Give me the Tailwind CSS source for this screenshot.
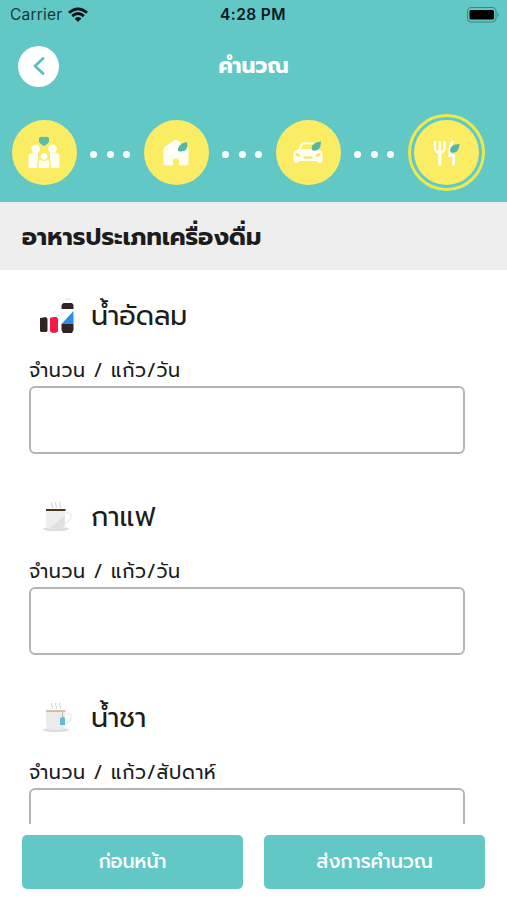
<!DOCTYPE html>
<html lang="th">
<head>
<meta charset="utf-8">
<title>คำนวณ</title>
<script src="https://cdn.jsdelivr.net/npm/@tailwindcss/browser@4"></script>
</head>
<body class="bg-white">
<div class="flex h-[900px] w-[507px] flex-col overflow-hidden bg-white font-['Prompt','Noto_Sans_Thai','Noto_Sans',sans-serif] text-[#1c1c1c]">
  <header class="h-[202px] shrink-0 bg-[#62c8c5]">
    <div class="grid h-[30px] grid-cols-3 items-center pr-[7px] pl-[10px] font-['Inter',sans-serif]">
      <div class="flex items-center gap-[6px] text-[15.5px] tracking-[0.2px] text-[#12393a]">
        <span>Carrier</span>
        <svg class="h-[16px] w-[20px]" viewBox="0 0 20 16" fill="none" stroke="#061516" stroke-width="2.8"><path d="M1 5.8Q10-2.1 19 5.8M4.2 9.1Q10 4 15.8 9.1"/><path d="M6.6 11.6Q10 8.5 13.4 11.6L10 15Z" fill="#061516" stroke="none"/></svg>
      </div>
      <span class="ml-[-4px] text-center text-[15.5px] font-semibold tracking-[0.4px] whitespace-nowrap text-[#07191a]">4:28 PM</span>
      <svg class="ml-auto h-[17px] w-[34px]" viewBox="0 0 34 17"><rect x="1.5" y=".5" width="28.5" height="14.5" rx="4" fill="none" stroke="#3f8582" stroke-width="1.1"/><rect x="3.5" y="3" width="24.5" height="9.5" rx="1.5" fill="#000"/><path d="M31.5 5.5Q34 7.8 31.5 10.1Z" fill="#3f8582"/></svg>
    </div>
    <div class="grid h-[72px] grid-cols-[40px_1fr_40px] items-center px-[18px]">
      <div class="flex h-[41px] w-[41px] items-center justify-center rounded-full bg-white">
        <svg class="h-[18px] w-[12px]" viewBox="0 0 12 18" fill="none" stroke="#5bbfba" stroke-width="2.8" stroke-linecap="round" stroke-linejoin="round"><path d="M10 1.5L2 9L10 16.5"/></svg>
      </div>
      <h1 class="text-center text-[21.5px] font-bold text-white"><span>คำนวณ</span></h1>
    </div>
    <div class="flex h-[101px] items-center pl-[11.5px]">
      <div class="flex h-[65px] w-[65px] items-center justify-center rounded-full bg-[#faed64]">
        <svg class="h-[34px] w-[34px]" viewBox="0 0 34 34"><path d="M12 2Q14 0 17 1Q20 0 22 2V6Q21 8 17 10Q13 8 12 6Z" fill="#5dbba9"/><g fill="#fffef4"><circle cx="8.7" cy="12.8" r="4.4"/><circle cx="25.5" cy="12.8" r="4.4"/><path d="M1.5 32V21Q1.5 17 5.5 17H11V24Q10 25 10 32ZM32.5 32V21Q32.5 17 28.5 17H23V24Q24 25 24 32ZM11.5 32V27Q11.5 24 14.5 24H19.5Q22.5 24 22.5 27V32Z"/><circle cx="17" cy="20.5" r="4" stroke="#f8e860" stroke-width="1"/></g></svg>
      </div>
      <div class="flex w-[67px] justify-center gap-[9.8px] pt-[3px]"><i class="h-[7px] w-[7px] rounded-full bg-white"></i><i class="h-[7px] w-[7px] rounded-full bg-white"></i><i class="h-[7px] w-[7px] rounded-full bg-white"></i></div>
      <div class="flex h-[65px] w-[65px] items-center justify-center rounded-full bg-[#faed64]">
        <svg class="h-[30px] w-[28px]" viewBox="0 0 28 30"><path d="M1.5 11Q1.5 9.5 3 8.5L12 2.5Q14 1 16 2.5L25 8.5Q26.5 9.5 26.5 11V25Q26.5 27.5 24 27.5H17V22Q17 20.5 15.5 20.5H13Q11 20.5 11 22V27.5H4Q1.5 27.5 1.5 25Z" fill="#fffef2"/><path d="M16 13Q15 6 25 4Q27 14 18 13.5Z" fill="#56b6a3"/></svg>
      </div>
      <div class="flex w-[67px] justify-center gap-[9.8px] pt-[3px]"><i class="h-[7px] w-[7px] rounded-full bg-white"></i><i class="h-[7px] w-[7px] rounded-full bg-white"></i><i class="h-[7px] w-[7px] rounded-full bg-white"></i></div>
      <div class="flex h-[65px] w-[65px] items-center justify-center rounded-full bg-[#faed64]">
        <svg class="h-[26px] w-[30px]" viewBox="0 0 30 26"><path d="M6 10L9 4.3Q9.5 3.3 11 3.3H19Q20.5 3.3 21.5 5L24 10" fill="none" stroke="#fffef2" stroke-width="2"/><path d="M.5 13.5Q2 9 7 9H23Q28 9 29.5 13.5V20Q29.5 23 27 23Q24.5 23 24 21H6Q5.5 23 3 23Q.5 23 .5 20Z" fill="#fffef2"/><path d="M2.5 13Q7 13 7.5 16.5H5Q2.5 16 2.5 13ZM27.5 13Q23 13 22.5 16.5H25Q27.5 16 27.5 13ZM10 16.5H20L19 18.5H11Z" fill="#f5e45f"/><path d="M19 10Q17 3 28 1.5Q28 12 20 10.5Z" fill="#56b6a3"/></svg>
      </div>
      <div class="flex w-[67px] justify-center gap-[9.8px] pt-[3px]"><i class="h-[7px] w-[7px] rounded-full bg-white"></i><i class="h-[7px] w-[7px] rounded-full bg-white"></i><i class="h-[7px] w-[7px] rounded-full bg-white"></i></div>
      <div class="flex h-[77px] w-[77px] items-center justify-center rounded-full border-[3px] border-[#ebe951]">
        <div class="flex h-[65px] w-[65px] shrink-0 items-center justify-center rounded-full bg-[#faed64]">
          <svg class="h-[28px] w-[28px]" viewBox="0 0 28 28"><g fill="none" stroke="#fffef2" stroke-linecap="round"><path d="M3 3V9Q3 13.5 7.8 13.5Q12.5 13.5 12.5 9V3M7.8 3V13" stroke-width="2.4"/><path d="M7.8 13V25" stroke-width="3.4"/><path d="M20.5 3Q17.5 7 18 16.5H21.5V25" stroke-width="3"/></g><path d="M18 12Q18 5 27.5 5Q27 15 19 13.5Z" fill="#56b6a3"/></svg>
        </div>
      </div>
    </div>
  </header>

  <div class="flex h-[68px] shrink-0 items-center bg-[#eeeeee] px-[22px] pt-[1px]"><h2 class="text-[24px] font-bold tracking-[0.15px] whitespace-nowrap"><span>อาหารประเภทเครื่องดื่ม</span></h2></div>

  <main class="h-[554px] shrink-0 overflow-hidden pr-[42px] pl-[29px]">
    <section class="h-[201px]">
      <div class="flex h-[90px] items-center pt-[2px] pl-[9px]">
        <svg class="h-[38px] w-[38px]" viewBox="0 0 38 38"><path d="M2 21L8 20L9.5 22V34L8 35H3L2 34ZM12 21L18 20L20 22V34L18 35.5H14L12 34Z" fill="#302522"/><path d="M12 21L18 20L20 22V34L18 35.5H14L12 34Z" fill="#fb1746"/><path d="M27 2.5Q30 1 33 2.5" fill="none" stroke="#ddd"/><path d="M23.5 12V8L25.5 6H34L35.5 8V12Z" fill="#302522"/><path d="M23.5 27L35.5 14V27Z" fill="#258ff0"/><path d="M23.5 27H35.5V33L34 36H25L23.5 33Z" fill="#302522"/></svg>
        <h3 class="ml-[15px] text-[27px] whitespace-nowrap"><span>น้ำอัดลม</span></h3>
      </div>
      <label class="flex h-[26px] items-center pb-[4px] text-[19px] tracking-[0.7px] whitespace-nowrap"><span>จำนวน / แก้ว/วัน</span></label>
      <div class="h-[68px] rounded-[6px] border-2 border-[#b5b5b5]"></div>
    </section>
    <section class="h-[201px]">
      <div class="flex h-[90px] items-center pt-[2px] pl-[9px]">
        <svg class="h-[38px] w-[38px]" viewBox="0 0 38 38"><ellipse cx="18" cy="31" rx="13" ry="2" fill="#dcdcdc"/><path d="M8 12H27V25Q27 31 21 31H14Q8 31 8 25Z" fill="#eeeeee"/><path d="M12 30L27 17V25Q27 31 21 31Z" fill="#e0e0e0"/><path d="M27 15H31Q33 15 33 18Q33 23 27 25" fill="none" stroke="#eee" stroke-width="1.5"/><path d="M8 12H27.5" stroke="#44391f" stroke-width="2"/><path d="M14 4Q12.8 5.5 14 7T14 10M18 4Q16.8 5.5 18 7T18 10M22 4Q20.8 5.5 22 7T22 10" fill="none" stroke="#ccc"/></svg>
        <h3 class="ml-[15px] text-[27px] whitespace-nowrap"><span>กาแฟ</span></h3>
      </div>
      <label class="flex h-[26px] items-center pb-[4px] text-[19px] tracking-[0.7px] whitespace-nowrap"><span>จำนวน / แก้ว/วัน</span></label>
      <div class="h-[68px] rounded-[6px] border-2 border-[#b5b5b5]"></div>
    </section>
    <section class="h-[201px]">
      <div class="flex h-[90px] items-center pt-[2px] pl-[9px]">
        <svg class="h-[38px] w-[38px]" viewBox="0 0 38 38"><ellipse cx="18" cy="31" rx="13" ry="2" fill="#dcdcdc"/><path d="M8 12H27V25Q27 31 21 31H14Q8 31 8 25Z" fill="#ebebeb"/><path d="M27 15H31Q33 15 33 18Q33 23 27 25" fill="none" stroke="#eee" stroke-width="1.5"/><path d="M8 12H27.5" stroke="#cdb490" stroke-width="1.6"/><path d="M24.5 13V19" stroke="#bbb"/><path d="M22 19.5L24 18H26L27 19.5V26H22Z" fill="#61bfd0"/><path d="M14 4Q12.8 5.5 14 7T14 10M18 4Q16.8 5.5 18 7T18 10M22 4Q20.8 5.5 22 7T22 10" fill="none" stroke="#ccc"/></svg>
        <h3 class="ml-[15px] text-[27px] whitespace-nowrap"><span>น้ำชา</span></h3>
      </div>
      <label class="flex h-[26px] items-center pb-[4px] text-[19px] tracking-[0.7px] whitespace-nowrap"><span>จำนวน / แก้ว/สัปดาห์</span></label>
      <div class="h-[68px] rounded-[6px] border-2 border-[#b5b5b5]"></div>
    </section>
  </main>

  <footer class="grid h-[76px] shrink-0 grid-cols-2 gap-[21px] bg-white px-[22px] pt-[11px] text-white">
    <button class="h-[54px] rounded-[5px] bg-[#62c8c5] text-[19px] font-medium"><span>ก่อนหน้า</span></button>
    <button class="h-[54px] rounded-[5px] bg-[#62c8c5] text-[19px] font-medium"><span>ส่งการคำนวณ</span></button>
  </footer>
</div>
</body>
</html>
